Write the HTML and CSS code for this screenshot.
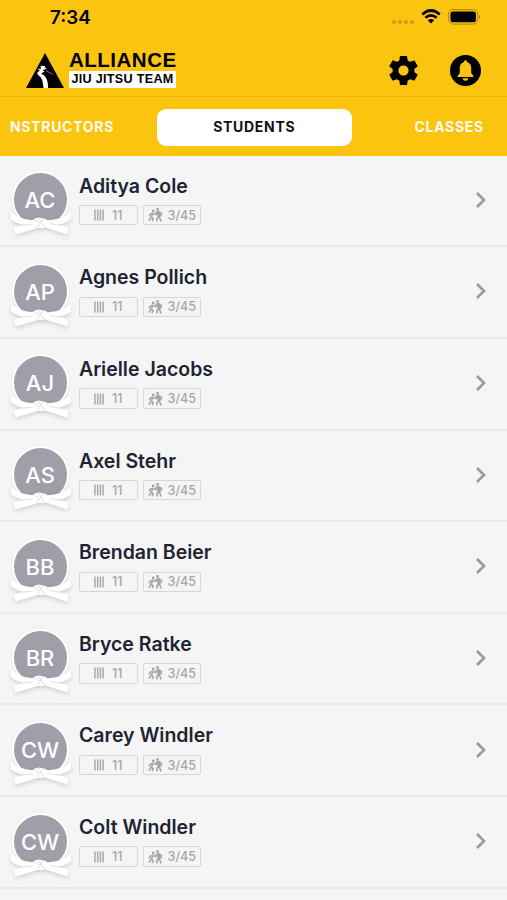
FILE: index.html
```html
<!DOCTYPE html>
<html lang="en">
<head>
  <meta charset="UTF-8">
  <meta name="viewport" content="width=device-width, initial-scale=1">
  <title>Alliance Jiu Jitsu Team - Students</title>
  <link rel="stylesheet" href="styles.css">
</head>
<body>
  <!-- Shared icons -->
  <svg class="icon-defs" width="0" height="0">
    <symbol id="belt" viewBox="0 0 62 25">
      <path d="M1.5 1Q8 8 25 9.5L26 15Q9 14.5 1 8.5Q.5 4 1.5 1ZM60.5 1Q54 8 36 9.5L35 15Q53 14.5 61 8.5Q61.5 4 60.5 1Z" fill="#fff"/>
      <path d="M27 9L4.5 16.5Q4 20 5.5 23.5L33 15.5ZM33 9.5L58 16.5Q58.5 20 57 23.5L28 14Z" fill="#fff"/>
      <path d="M22.5 9Q25 6.5 29 6.5L36 8Q39 10 37 14L32.5 17.5L26 16Q22 13 22.5 9Z" fill="#fff"/>
      <path d="M10 14.5L22.5 13M40 12.5L51 14.5M24 8.5L29.5 12.5L27 16.5M28 7L34 15.5M33 8L30 12" fill="none" stroke="#dcdce0" stroke-width=".9"/>
    </symbol>
    <symbol id="stripes" viewBox="0 0 10 12">
      <path d="M1 .5V11.5M3.7 .5V11.5M6.4 .5V11.5M9.1 .5V11.5" stroke="#a9aaaf" stroke-width="1.5"/>
    </symbol>
    <symbol id="grappling" viewBox="0 0 15 14">
      <circle cx="5.2" cy="3" r="1.4" fill="#a2a3a8"/>
      <circle cx="9.6" cy="1.5" r="1.4" fill="#a2a3a8"/>
      <path d="M5 5.5L3.4 9L5.3 10.8L4 13.2M3.4 9L.8 12.6M4.8 5.3L2 6.4L1.3 8.4M5.2 5.4L8 6.5L9.6 4.4" fill="none" stroke="#a2a3a8" stroke-width="1.5"/>
      <path d="M10.6 3.3L11.2 8.3L13 13.5M10.8 8L9.1 10.3L8.8 13.5M11 3.8L13.6 5.6L12.7 8.2M10.6 4L7.5 4.6" fill="none" stroke="#a2a3a8" stroke-width="1.6"/>
      <path d="M9 3.4H11.8L12.4 8.8H9.6Z" fill="#a2a3a8"/>
    </symbol>
    <symbol id="chevron" viewBox="0 0 12 18">
      <path d="M2 2L9 9L2 16" fill="none" stroke="#9a9a9c" stroke-width="2.6"/>
    </symbol>
  </svg>

  <header class="header">
    <div class="status-bar">
      <span class="time">7:34</span>
      <div class="status-icons">
        <span class="signal"><i></i><i></i><i></i><i></i></span>
        <svg class="wifi" viewBox="0 0 20 15">
          <path d="M1.3 5.4Q10 -2.4 18.7 5.4M4.4 8.7Q10 4 15.6 8.7" fill="none" stroke="#000" stroke-width="2.7"/>
          <path d="M6.8 11.2Q10 8.7 13.2 11.2L10 14.5Z"/>
        </svg>
        <svg class="battery" viewBox="0 0 33 16">
          <rect x=".7" y=".7" width="29" height="14.4" rx="4.3" fill="none" stroke="#a98612" stroke-width="1"/>
          <rect x="2.5" y="2.5" width="25.4" height="10.8" rx="2.6"/>
          <path d="M31 5.7Q33.5 8 31 10.3Z" fill="#a98612"/>
        </svg>
      </div>
    </div>
    <div class="top-bar">
      <div class="logo">
        <svg class="logo-mark" viewBox="0 0 38 35">
          <path d="M19 0L38 35H0Z"/>
          <path d="M17.5 35C17 28 16 25 12.8 22.5C10.5 21 11 18.5 14 18L11.5 15.5L15 16L14.5 13L19.5 13L18.3 14.3L21 15.5L16.5 17.2L18.7 18.5L15 20.5C20 22.5 22.3 27.5 22 35Z" fill="#fff"/>
          <path d="M20 17.5L27 21.5" stroke="#aaa" stroke-width=".7"/>
        </svg>
        <div class="logo-text">
          <span class="logo-name">ALLIANCE</span>
          <span class="logo-team">JIU JITSU TEAM</span>
        </div>
      </div>
      <div class="actions">
        <svg class="gear" viewBox="2 2 20 20">
          <path d="M19.43 12.98c.04-.32.07-.64.07-.98s-.03-.66-.07-.98l2.11-1.65c.19-.15.24-.42.12-.64l-2-3.46c-.12-.22-.39-.3-.61-.22l-2.49 1c-.52-.4-1.08-.73-1.69-.98l-.38-2.65C14.46 2.18 14.25 2 14 2h-4c-.25 0-.46.18-.49.42l-.38 2.65c-.61.25-1.17.59-1.69.98l-2.49-1c-.23-.09-.49 0-.61.22l-2 3.46c-.13.22-.07.49.12.64l2.11 1.65c-.04.32-.07.65-.07.98s.03.66.07.98l-2.11 1.65c-.19.15-.24.42-.12.64l2 3.46c.12.22.39.3.61.22l2.49-1c.52.4 1.08.73 1.69.98l.38 2.65c.03.24.24.42.49.42h4c.25 0 .46-.18.49-.42l.38-2.65c.61-.25 1.17-.59 1.69-.98l2.49 1c.23.09.49 0 .61-.22l2-3.46c.12-.22.07-.49-.12-.64l-2.11-1.65zM12 15.5c-1.93 0-3.5-1.57-3.5-3.5s1.57-3.5 3.5-3.5 3.5 1.57 3.5 3.5-1.57 3.5-3.5 3.5z"/>
        </svg>
        <svg class="bell" viewBox="0 0 31 31">
          <circle cx="15.5" cy="15.5" r="15.5"/>
          <path d="M15.5 5.2C14.4 5.2 14 6 14 7C10.9 7.8 9.8 10.3 9.8 13.5V18L7.6 20.8V22H23.4V20.8L21.2 18V13.5C21.2 10.3 20.1 7.8 17 7C17 6 16.6 5.2 15.5 5.2ZM12.7 23.2H18.3A2.8 2.5 0 0 1 12.7 23.2Z" fill="#fbc40f"/>
        </svg>
      </div>
    </div>
    <nav class="tabs">
      <span class="tab tab-left">NSTRUCTORS</span>
      <span class="tab active">STUDENTS</span>
      <span class="tab tab-right">CLASSES</span>
    </nav>
  </header>

  <main class="students">
    <div class="student">
      <div class="avatar">AC<svg class="belt"><use href="#belt"/></svg></div>
      <div class="info">
        <h2>Aditya Cole</h2>
        <div class="badges">
          <span class="badge"><svg class="stripes"><use href="#stripes"/></svg>11</span>
          <span class="badge classes"><svg class="grappling"><use href="#grappling"/></svg>3/45</span>
        </div>
      </div>
      <svg class="chevron"><use href="#chevron"/></svg>
    </div>
    <div class="student">
      <div class="avatar">AP<svg class="belt"><use href="#belt"/></svg></div>
      <div class="info">
        <h2>Agnes Pollich</h2>
        <div class="badges">
          <span class="badge"><svg class="stripes"><use href="#stripes"/></svg>11</span>
          <span class="badge classes"><svg class="grappling"><use href="#grappling"/></svg>3/45</span>
        </div>
      </div>
      <svg class="chevron"><use href="#chevron"/></svg>
    </div>
    <div class="student">
      <div class="avatar">AJ<svg class="belt"><use href="#belt"/></svg></div>
      <div class="info">
        <h2>Arielle Jacobs</h2>
        <div class="badges">
          <span class="badge"><svg class="stripes"><use href="#stripes"/></svg>11</span>
          <span class="badge classes"><svg class="grappling"><use href="#grappling"/></svg>3/45</span>
        </div>
      </div>
      <svg class="chevron"><use href="#chevron"/></svg>
    </div>
    <div class="student">
      <div class="avatar">AS<svg class="belt"><use href="#belt"/></svg></div>
      <div class="info">
        <h2>Axel Stehr</h2>
        <div class="badges">
          <span class="badge"><svg class="stripes"><use href="#stripes"/></svg>11</span>
          <span class="badge classes"><svg class="grappling"><use href="#grappling"/></svg>3/45</span>
        </div>
      </div>
      <svg class="chevron"><use href="#chevron"/></svg>
    </div>
    <div class="student">
      <div class="avatar">BB<svg class="belt"><use href="#belt"/></svg></div>
      <div class="info">
        <h2>Brendan Beier</h2>
        <div class="badges">
          <span class="badge"><svg class="stripes"><use href="#stripes"/></svg>11</span>
          <span class="badge classes"><svg class="grappling"><use href="#grappling"/></svg>3/45</span>
        </div>
      </div>
      <svg class="chevron"><use href="#chevron"/></svg>
    </div>
    <div class="student">
      <div class="avatar">BR<svg class="belt"><use href="#belt"/></svg></div>
      <div class="info">
        <h2>Bryce Ratke</h2>
        <div class="badges">
          <span class="badge"><svg class="stripes"><use href="#stripes"/></svg>11</span>
          <span class="badge classes"><svg class="grappling"><use href="#grappling"/></svg>3/45</span>
        </div>
      </div>
      <svg class="chevron"><use href="#chevron"/></svg>
    </div>
    <div class="student">
      <div class="avatar">CW<svg class="belt"><use href="#belt"/></svg></div>
      <div class="info">
        <h2>Carey Windler</h2>
        <div class="badges">
          <span class="badge"><svg class="stripes"><use href="#stripes"/></svg>11</span>
          <span class="badge classes"><svg class="grappling"><use href="#grappling"/></svg>3/45</span>
        </div>
      </div>
      <svg class="chevron"><use href="#chevron"/></svg>
    </div>
    <div class="student">
      <div class="avatar">CW<svg class="belt"><use href="#belt"/></svg></div>
      <div class="info">
        <h2>Colt Windler</h2>
        <div class="badges">
          <span class="badge"><svg class="stripes"><use href="#stripes"/></svg>11</span>
          <span class="badge classes"><svg class="grappling"><use href="#grappling"/></svg>3/45</span>
        </div>
      </div>
      <svg class="chevron"><use href="#chevron"/></svg>
    </div>
  </main>
</body>
</html>
```
FILE: styles.css
```css
* {
  box-sizing: border-box;
}
body {
  font-family: Inter, "Liberation Sans", sans-serif;
  margin: 0;
  height: 900px;
  overflow: hidden;
  background-color: #f5f5f5;
}
svg {
  display: block;
  flex: none;
}
.icon-defs {
  position: absolute;
}
.header {
  height: 155.6px;
  background-color: #fbc40f;
}
.status-bar {
  display: flex;
  justify-content: space-between;
  height: 44px;
  padding: 9px 26px 0 50px;
}
.time {
  font-size: 18.8px;
  font-weight: 600;
  line-height: 17px;
}
.status-icons {
  display: flex;
  align-items: flex-start;
  gap: 7px;
}
.signal {
  display: flex;
  gap: 2px;
  padding-top: 11px;
}
.signal i {
  width: 4px;
  height: 4px;
  border-radius: 50%;
  background: #c99e15;
}
.wifi {
  width: 20px;
  height: 15px;
}
.battery {
  width: 33px;
  height: 16px;
}
.top-bar {
  display: flex;
  justify-content: space-between;
  height: 53px;
  padding: 9px 26px 0 26px;
  border-bottom: 1px solid #e9b511;
}
.logo {
  display: flex;
  gap: 5px;
}
.logo-mark {
  width: 38px;
  height: 35px;
}
.logo-text {
  display: flex;
  flex-direction: column;
  font-family: "Liberation Sans", Arial, sans-serif;
  font-weight: bold;
  white-space: nowrap;
}
.logo-name {
  font-size: 20.5px;
  line-height: 14px;
  height: 18px;
  letter-spacing: 0.5px;
}
.logo-team {
  width: 107px;
  height: 17px;
  background: #fff;
  font-size: 12.6px;
  line-height: 17px;
  letter-spacing: 0.3px;
  text-align: center;
}
.actions {
  display: flex;
  align-items: center;
  gap: 32px;
  height: 35px;
}
.gear {
  width: 29px;
  height: 29px;
}
.bell {
  width: 31px;
  height: 31px;
}
.tabs {
  display: grid;
  grid-template-columns: 157px 194.5px 1fr;
  align-items: center;
  height: 58px;
  padding-top: 2px;
}
.tab {
  color: #fffbee;
  font-size: 14px;
  font-weight: 650;
  line-height: 17px;
  letter-spacing: 0.7px;
  padding-bottom: 2px;
}
.tab-left {
  padding-left: 10px;
}
.tab-right {
  padding-left: 63px;
}
.tab.active {
  height: 37px;
  line-height: 36px;
  padding-bottom: 0;
  border-radius: 9px;
  background: #fff;
  color: #111;
  text-align: center;
}
.student {
  display: flex;
  height: 91.65px;
  padding: 15.6px 20px 0 11.5px;
  border-bottom: 2px solid #eaeaeb;
}
.avatar {
  position: relative;
  width: 57px;
  height: 57px;
  border: 2px solid #fff;
  border-radius: 50%;
  background: #a09fa9;
  color: #fff;
  font-size: 22px;
  font-weight: 500;
  line-height: 54px;
  text-align: center;
  box-shadow: 0 1px 3px rgba(0,0,0,0.08);
}
.belt {
  position: absolute;
  left: -4px;
  top: 38px;
  width: 62px;
  height: 25px;
  filter: drop-shadow(0 2px 2px rgba(0,0,0,0.14));
}
.info {
  flex: 1;
  padding-left: 10.5px;
}
h2 {
  margin: 2.4px 0 7.4px;
  color: #1d2433;
  font-size: 19.5px;
  font-weight: 620;
  line-height: 24px;
}
.badges {
  display: flex;
  gap: 5px;
}
.badge {
  display: flex;
  align-items: center;
  justify-content: center;
  gap: 8px;
  width: 58.5px;
  height: 20.5px;
  border: 1.5px solid #d6d7da;
  border-radius: 2px;
  color: #a5a6ab;
  font-size: 12.5px;
  font-weight: 500;
}
.badge.classes {
  gap: 5px;
}
.stripes {
  width: 10px;
  height: 12px;
}
.grappling {
  width: 15px;
  height: 14px;
}
.chevron {
  width: 12px;
  height: 18px;
  margin-top: 19.5px;
}
```
